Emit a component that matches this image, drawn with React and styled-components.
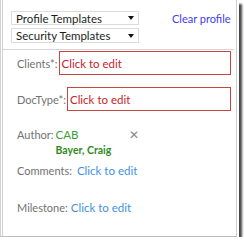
import React from "react";
import styled, { createGlobalStyle } from "styled-components";

const Global = createGlobalStyle`
  body {
    margin: 0;
    background: #fff;
    font-family: Lato, "Noto Sans", sans-serif;
  }
`;

const Frame = styled.div`
  width: 235px;
  height: 236px;
  border-left: 1px solid #d2d2d2;
  border-right: 1px solid #cfcfcf;
  border-bottom: 1px solid #bdbdbd;
  box-shadow: 2px 0 0 #fff, 5px 4px 2px rgba(40, 40, 40, 0.85);
  display: flex;
`;

const Panel = styled.div`
  flex: 1;
  margin-left: 1px;
  border-left: 1px solid #d2d2d2;
  display: flex;
  flex-direction: column;
`;

const Top = styled.div`
  height: 38px;
  padding: 11px 0 0 8px;
  border-bottom: 1px solid #d6d6d6;
  margin-right: 2px;
  display: flex;
  align-items: flex-start;
`;

const Selects = styled.div`
  display: flex;
  flex-direction: column;
  gap: 3px;
`;

const Select = styled.div`
  box-sizing: border-box;
  width: 128px;
  height: ${p => p.$h}px;
  border: 1px solid #dcdcdc;
  padding: 0 4px;
  font-size: 11.5px;
  color: #1e1e1e;
  display: flex;
  align-items: center;
  justify-content: space-between;
`;

const Arrow = styled.span`
  width: 0;
  height: 0;
  border-left: 3px solid transparent;
  border-right: 3px solid transparent;
  border-top: 4px solid #111;
`;

const ClearLink = styled.a`
  margin-left: 33px;
  margin-top: 1px;
  font-size: 11px;
  color: #4040f2;
  text-decoration: none;
  white-space: nowrap;
`;

const Row = styled.div`
  display: flex;
  align-items: ${p => (p.$top ? "flex-start" : "center")};
  margin-top: ${p => p.$mt}px;
  padding-left: 14px;
  padding-right: 5px;
  font-size: 11px;
  white-space: nowrap;
`;

const Label = styled.span`
  color: #727272;
`;

const EditBox = styled.div`
  flex: 1;
  box-sizing: border-box;
  height: 24px;
  margin-left: 1px;
  border: 1.5px solid #c9463f;
  padding-left: 2px;
  display: flex;
  align-items: center;
  color: #c8222c;
  font-size: 11.5px;
`;

const Author = styled.div`
  display: flex;
  flex-direction: column;
  margin-left: 2px;
`;

const Initials = styled.span`
  color: #3a9e36;
  font-size: 11.5px;
`;

const FullName = styled.span`
  color: #2f8a1d;
  font-size: 10.5px;
  font-weight: 700;
  margin-top: 3px;
`;

const Remove = styled.span`
  color: #8a8a8a;
  font-size: 12px;
  margin-left: 18px;
  margin-top: -1px;
`;

const Link = styled.span`
  color: #3f8fe6;
  font-size: 11.5px;
  margin-left: ${p => p.$ml}px;
`;

export default function App() {
  return (
    <>
      <Global />
      <Frame>
        <Panel>
          <Top>
            <Selects>
              <Select $h={14}>
                Profile Templates <Arrow />
              </Select>
              <Select $h={15}>
                Security Templates <Arrow />
              </Select>
            </Selects>
            <ClearLink>Clear profile</ClearLink>
          </Top>
          <Row $mt={1}>
            <Label>Clients*:</Label>
            <EditBox>Click to edit</EditBox>
          </Row>
          <Row $mt={12}>
            <Label>DocType*:</Label>
            <EditBox>Click to edit</EditBox>
          </Row>
          <Row $mt={17} $top>
            <Label>Author:</Label>
            <Author>
              <Initials>CAB</Initials>
              <FullName>Bayer, Craig</FullName>
            </Author>
            <Remove>✕</Remove>
          </Row>
          <Row $mt={8}>
            <Label>Comments:</Label>
            <Link $ml={5}>Click to edit</Link>
          </Row>
          <Row $mt={24}>
            <Label>Milestone:</Label>
            <Link $ml={3}>Click to edit</Link>
          </Row>
        </Panel>
      </Frame>
    </>
  );
}
